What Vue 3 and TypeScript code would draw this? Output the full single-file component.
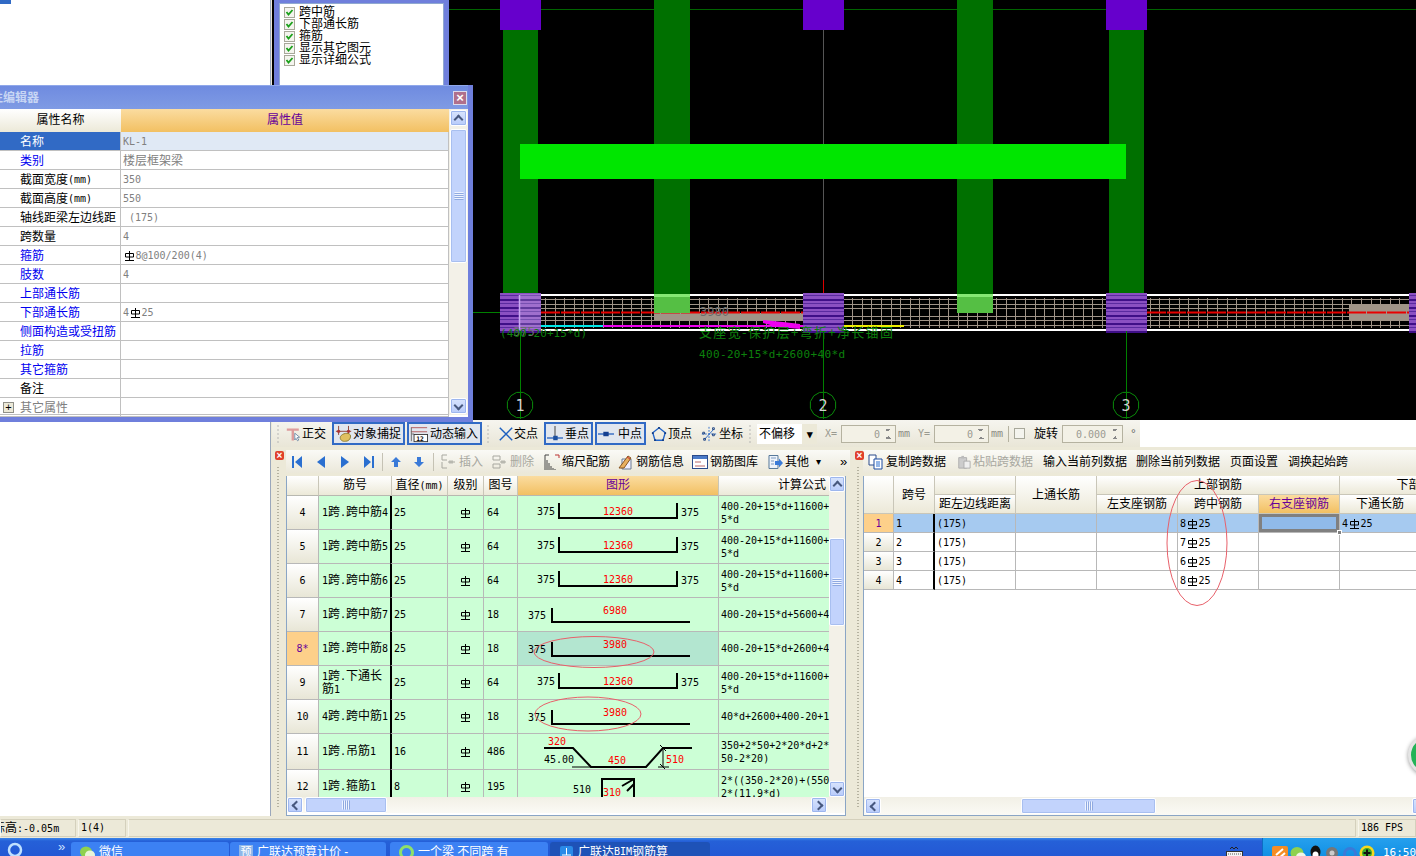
<script setup lang="ts">
import { h } from 'vue';

// Splits text into latin / CJK runs, the old bitmap font had 6px latin and 12px CJK.
// The rebar grade mark has no unicode glyph, so "⌀" becomes a small svg.
function Txt(props: { s: string }) {
  const runs = props.s.match(/⌀|[\x20-\x7e\n]+|[^\x20-\x7e⌀\n]+/g) ?? [];
  return runs.map((r) => {
    if (r === '⌀') {
      return h('svg', { class: 'bar', viewBox: '0 0 9 10', width: 9, height: 10 }, [
        h('path', { d: 'M.5 2.5h8v3.5h-8zM4.5 0v9.5M0 9.5h9', fill: 'none', stroke: '#000', 'stroke-width': 1 }),
      ]);
    }
    return h('span', { class: /^[\x20-\x7e\n]/.test(r) ? 'lat' : undefined }, r);
  });
}
Txt.props = ['s'];

const checks = ['跨中筋', '下部通长筋', '箍筋', '显示其它图元', '显示详细公式'];

const propRows = [
  { name: '名称', value: 'KL-1', kind: 'sel' },
  { name: '类别', value: '楼层框架梁', kind: 'blue' },
  { name: '截面宽度(mm)', value: '350', kind: '' },
  { name: '截面高度(mm)', value: '550', kind: '' },
  { name: '轴线距梁左边线距', value: ' (175)', kind: '' },
  { name: '跨数量', value: '4', kind: '' },
  { name: '箍筋', value: '⌀8@100/200(4)', kind: 'blue' },
  { name: '肢数', value: '4', kind: 'blue' },
  { name: '上部通长筋', value: '', kind: 'blue' },
  { name: '下部通长筋', value: '4⌀25', kind: 'blue' },
  { name: '侧面构造或受扭筋', value: '', kind: 'blue' },
  { name: '拉筋', value: '', kind: 'blue' },
  { name: '其它箍筋', value: '', kind: 'blue' },
  { name: '备注', value: '', kind: '' },
  { name: '其它属性', value: '', kind: 'group' },
];

const snapA = [
  { icon: 'ortho', label: '正交', w: 47, on: false },
  { icon: 'magnet', label: '对象捕捉', w: 73, on: true },
  { icon: 'dyn', label: '动态输入', w: 75, on: true },
];
const snapB = [
  { icon: 'cross', label: '交点', w: 47, on: false },
  { icon: 'perp', label: '垂点', w: 49, on: true },
  { icon: 'mid', label: '中点', w: 51, on: true },
  { icon: 'vertex', label: '顶点', w: 48, on: false },
  { icon: 'coord', label: '坐标', w: 49, on: false },
];

const leftTools = [
  { icon: 'insert', label: '插入', w: 44, off: true },
  { icon: 'remove', label: '删除', w: 45, off: true },
  { icon: 'scale', label: '缩尺配筋', w: 67, off: false },
  { icon: 'info', label: '钢筋信息', w: 67, off: false },
  { icon: 'lib', label: '钢筋图库', w: 68, off: false },
  { icon: 'other', label: '其他', w: 42, off: false },
];

const rightTools = [
  { icon: 'copy', label: '复制跨数据', off: false, w: 79 },
  { icon: 'paste', label: '粘贴跨数据', off: true, w: 76 },
  { icon: '', label: '输入当前列数据', off: false, w: 83 },
  { icon: '', label: '删除当前列数据', off: false, w: 84 },
  { icon: '', label: '页面设置', off: false, w: 48 },
  { icon: '', label: '调换起始跨', off: false, w: 60 },
];

const barRows = [
  { no: '4', name: '1跨.跨中筋4', dia: '25', pic: '64', fig: 'u', len: '12360', formula: '400-20+15*d+11600+\n5*d' },
  { no: '5', name: '1跨.跨中筋5', dia: '25', pic: '64', fig: 'u', len: '12360', formula: '400-20+15*d+11600+\n5*d' },
  { no: '6', name: '1跨.跨中筋6', dia: '25', pic: '64', fig: 'u', len: '12360', formula: '400-20+15*d+11600+\n5*d' },
  { no: '7', name: '1跨.跨中筋7', dia: '25', pic: '18', fig: 'l', len: '6980', formula: '400-20+15*d+5600+40*d' },
  { no: '8*', name: '1跨.跨中筋8', dia: '25', pic: '18', fig: 'l', len: '3980', formula: '400-20+15*d+2600+40*d', cur: true },
  { no: '9', name: '1跨.下通长筋1', dia: '25', pic: '64', fig: 'u', len: '12360', formula: '400-20+15*d+11600+\n5*d' },
  { no: '10', name: '4跨.跨中筋1', dia: '25', pic: '18', fig: 'l', len: '3980', formula: '40*d+2600+400-20+15*d' },
  { no: '11', name: '1跨.吊筋1', dia: '16', pic: '486', fig: 'hanger', len: '', formula: '350+2*50+2*20*d+2*\n50-2*20)', tall: true },
  { no: '12', name: '1跨.箍筋1', dia: '8', pic: '195', fig: 'hoop', len: '', formula: '2*((350-2*20)+(550-\n2*(11.9*d)' },
];

const spanRows = [
  { no: '1', mid: '8⌀25', low: '4⌀25', cur: true },
  { no: '2', mid: '7⌀25', low: '', cur: false },
  { no: '3', mid: '6⌀25', low: '', cur: false },
  { no: '4', mid: '8⌀25', low: '', cur: false },
];

const axes = [
  { x: 520, n: '1' },
  { x: 823, n: '2' },
  { x: 1126, n: '3' },
];

// Axis bubbles are 12 sided on the CAD canvas
const ring = Array.from({ length: 12 }, (_, i) => {
  const a = (i * Math.PI) / 6 + Math.PI / 12;
  return `${(13 * Math.cos(a)).toFixed(1)},${(13 * Math.sin(a)).toFixed(1)}`;
}).join(' ');

const columnsAt = [500, 803, 1106, 1409];
const hatchY = [299, 304, 308, 316, 320, 325];
const stirrups: number[] = [];
for (let x = 545; x < 1409; x += 9.6) {
  if (x > 800 && x < 846) continue;
  if (x > 1103 && x < 1149) continue;
  stirrups.push(Math.round(x) + 0.5);
}
</script>

<template>
  <div class="app">
    <svg class="defs" width="0" height="0">
      <symbol id="i-ortho" viewBox="0 0 20 18">
        <path d="M1 2h15v3h-6v12H7V5H1z" fill="#dd9c9c" />
        <path d="M11 8l6 5-3 .5 2 3-1.500 1-2-3-1.500 2z" fill="#fff" stroke="#5a7a9a" />
      </symbol>
      <symbol id="i-magnet" viewBox="0 0 20 18">
        <path d="M4 0v10M15 0v10M1 6h17" stroke="#8a3a2a" fill="none" />
        <circle cx="4" cy="6" r="1.800" fill="#a33" />
        <circle cx="15" cy="6" r="1.800" fill="#a33" />
        <path d="M6 12c2-4 9-5 11-2 1 3-1 7-5 7-4 1-7-2-6-5z" fill="#e0c060" stroke="#8a7a30" />
      </symbol>
      <symbol id="i-dyn" viewBox="0 0 20 18">
        <path d="M1 2h18M1 6.500h18" stroke="#b05050" fill="none" />
        <path d="M1.500 2v15M1.500 9h3" stroke="#666" fill="none" />
        <rect x="4.500" y="9.500" width="15" height="8" fill="#fff" stroke="#333" />
        <text x="7" y="16.500" font-size="7" font-family="DejaVu Sans Mono" font-weight="700">12</text>
      </symbol>
      <symbol id="i-cross" viewBox="0 0 18 18">
        <path d="M2 2l14 14M16 2L2 16" stroke="#1c5fc0" stroke-width="1.600" />
      </symbol>
      <symbol id="i-perp" viewBox="0 0 18 18">
        <path d="M9 0v13" stroke="#333" />
        <path d="M0 13.500h18" stroke="#2a63c0" stroke-width="1.500" />
        <rect x="7" y="11" width="5" height="5" fill="#1c4fa0" />
      </symbol>
      <symbol id="i-mid" viewBox="0 0 18 18">
        <path d="M0 9h18" stroke="#2a63c0" stroke-width="1.500" />
        <rect x="6" y="6.500" width="6" height="5" fill="#153f90" />
      </symbol>
      <symbol id="i-vertex" viewBox="0 0 18 18">
        <path d="M9 2l7 5.500L13.500 16h-9L2 7.500z" fill="none" stroke="#2263c8" stroke-width="1.500" />
        <path d="M8 1h2v2H8zM1 7h2v2H1zM15 7h2v2h-2zM3.500 15h2v2h-2zM12.500 15h2v2h-2z" fill="#143c80" />
      </symbol>
      <symbol id="i-coord" viewBox="0 0 18 18">
        <path d="M9 1v16M1 9h16" stroke="#2263c8" stroke-dasharray="2 1.500" />
        <path d="M4 15L14 4" stroke="#2263c8" />
        <path d="M2 7h2v2H2zM13 2h2v2h-2zM3 14h2v2H3zM13 9h2v2h-2z" fill="none" stroke="#143c80" />
      </symbol>
      <symbol id="i-first" viewBox="0 0 12 14">
        <path d="M1 1h2v12H1zM11 1v12L4 7z" fill="#2a6fd0" />
      </symbol>
      <symbol id="i-prev" viewBox="0 0 12 14"><path d="M10 1v12L2 7z" fill="#2a6fd0" /></symbol>
      <symbol id="i-next" viewBox="0 0 12 14"><path d="M2 1v12l8-6z" fill="#2a6fd0" /></symbol>
      <symbol id="i-last" viewBox="0 0 12 14">
        <path d="M9 1h2v12H9zM1 1v12l7-6z" fill="#2a6fd0" />
      </symbol>
      <symbol id="i-up" viewBox="0 0 12 12"><path d="M6 1l5 5H8v5H4V6H1z" fill="#3a7ad8" /></symbol>
      <symbol id="i-down" viewBox="0 0 12 12"><path d="M6 11L1 6h3V1h4v5h3z" fill="#3a7ad8" /></symbol>
      <symbol id="i-insert" viewBox="0 0 16 16">
        <path d="M1 1h5M1 1v5h5M1 8v6h5M7 8h7" stroke="#a8a8a0" fill="none" />
        <rect x="8" y="6.500" width="4" height="3" fill="#b8b8b0" />
      </symbol>
      <symbol id="i-remove" viewBox="0 0 16 16">
        <path d="M1 2h7v4H1zM1 10h7v4H1zM8 8h6" stroke="#a8a8a0" fill="none" />
        <rect x="9" y="6.500" width="4" height="3" fill="#b8b8b0" />
      </symbol>
      <symbol id="i-scale" viewBox="0 0 16 16">
        <path d="M1 16V1h4M3 16V6M5 16V9M7 16v-4M9 16v-2M11 16v-1" stroke="#444" fill="none" />
        <path d="M11 1h4v3" stroke="#b33" fill="none" />
      </symbol>
      <symbol id="i-info" viewBox="0 0 16 16">
        <path d="M4 5h9v10H4z" fill="#eef" stroke="#6a7a90" />
        <path d="M1 14l9-12 3 2L6 14z" fill="#e8b060" stroke="#885522" />
        <path d="M9 3l3 2" stroke="#c33" />
      </symbol>
      <symbol id="i-lib" viewBox="0 0 16 16">
        <rect x=".5" y="1.500" width="15" height="13" fill="#fff" stroke="#2a4a8a" />
        <path d="M1 2h14v3H1z" fill="#4a7ac8" />
        <path d="M3 8h6M3 12h10" stroke="#b66" />
      </symbol>
      <symbol id="i-other" viewBox="0 0 16 16">
        <path d="M2 1.500h9v13H2z" fill="#eef3fb" stroke="#56789a" />
        <path d="M4 4h5M4 7h3M4 10h3" stroke="#7a9ac0" />
        <path d="M8 7h4V4.500L16 9l-4 4.500V11H8z" fill="#3a7ad8" />
      </symbol>
      <symbol id="i-copy" viewBox="0 0 16 16">
        <path d="M1 1h7v10H1z" fill="#fff" stroke="#2a4a8a" />
        <path d="M6 5h8v10H6z" fill="#fff" stroke="#1a4aa0" />
        <path d="M8 8h4M8 10h4M8 12h4" stroke="#2a6fd0" />
      </symbol>
      <symbol id="i-paste" viewBox="0 0 16 16">
        <path d="M2 3h9v12H2z" fill="#ccc" stroke="#aaa" />
        <path d="M5 1h3v3H5z" fill="#bbb" />
        <path d="M8 7h7v8H8z" fill="#eee" stroke="#aaa" />
      </symbol>
    </svg>

    <!-- left tree pane, covered for most part by the property window -->
    <aside class="tree-pane"><div class="tree-sel"></div></aside>

    <main class="workspace">
      <section class="canvas-area">
        <svg class="cad" viewBox="272 0 1144 420" width="1144" height="420">
          <defs>
            <pattern id="hatch" width="41" height="8" patternUnits="userSpaceOnUse">
              <rect width="41" height="8" fill="#8a50c2" />
              <rect y="3" width="41" height="2" fill="#3f0f88" />
              <rect y="7" width="41" height="1" fill="#5a2aa0" />
            </pattern>
          </defs>
          <path d="M449 9.500H1416" stroke="#006400" />
          <path d="M472 312.500H500" stroke="#008000" />
          <g fill="#007000">
            <rect x="503" y="30" width="35" height="264" />
            <rect x="654" y="0" width="36" height="294" />
            <rect x="957" y="0" width="36" height="294" />
            <rect x="1109" y="30" width="35" height="264" />
          </g>
          <path d="M823.500 30V280" stroke="#555" />
          <path d="M823.500 280V294" stroke="#d00" />
          <g fill="#6600cc">
            <rect x="500" y="0" width="41" height="30" />
            <rect x="803" y="0" width="41" height="30" />
            <rect x="1106" y="0" width="41" height="30" />
          </g>
          <rect x="520" y="144" width="606" height="35" fill="#00e600" />

          <!-- beam elevation -->
          <rect x="500" y="294" width="916" height="2" fill="#fff" />
          <rect x="500" y="329" width="916" height="2" fill="#fff" />
          <path v-for="y in hatchY" :key="y" :d="`M500 ${y + 0.5}H1416`" stroke="#a09488" />
          <path v-for="x in stirrups" :key="x" :d="`M${x} 298V328`" stroke="#a09488" />
          <rect x="654" y="313" width="149" height="7" fill="#a09488" />
          <rect x="1349" y="304" width="60" height="17" fill="#a09488" />
          <path d="M541 312.500H803M1147 312.500H1409" stroke="#e80000" stroke-width="2" stroke-dasharray="19 1" />
          <rect x="541" y="325" width="62" height="2" fill="#00e8e8" />
          <rect x="603" y="325" width="200" height="2" fill="#f000f0" />
          <path d="M763 320l20 2 17 2v5l-22-2-15-4z" fill="#f000f0" />
          <rect x="844" y="325" width="60" height="2" fill="#f0f000" />
          <g fill="#55bf44">
            <rect x="654" y="294" width="36" height="19" />
            <rect x="957" y="294" width="36" height="19" />
          </g>
          <g fill="#86e874">
            <rect x="654" y="294" width="36" height="3" />
            <rect x="957" y="294" width="36" height="3" />
          </g>
          <rect v-for="x in columnsAt" :key="x" :x="x" y="293" width="41" height="40" fill="url(#hatch)" />
          <rect x="520" y="294" width="21" height="35" fill="#fff" opacity=".18" />
          <path d="M519.500 295V330" stroke="#c8a8f0" stroke-width="1.500" />
          <text class="cad-dim" x="700" y="316">3980</text>
          <text class="cad-dim" x="513" y="336">375</text>
          <text class="cad-note" x="500" y="337" textLength="87">(400-20+15*d)</text>
          <text class="cad-note cjk" x="699" y="337" textLength="194">支座宽-保护层+弯折+净长锚固</text>
          <text class="cad-note" x="699" y="358" textLength="146">400-20+15*d+2600+40*d</text>

          <!-- axis bubbles -->
          <g v-for="a in axes" :key="a.n" :transform="`translate(${a.x} 405)`">
            <path d="M.5 -74V14" stroke="#008000" />
            <polygon :points="ring" fill="#000" stroke="#0a8a0a" />
            <path d="M.5 -13V14" stroke="#008000" />
            <text class="axis-no" x="0" y="6">{{ a.n }}</text>
          </g>
        </svg>

        <div class="check-panel">
          <ul class="check-list">
            <li v-for="c in checks" :key="c">
              <svg class="check" viewBox="0 0 11 11" width="11" height="11">
                <rect x=".5" y=".5" width="10" height="10" fill="#f4f4ee" stroke="#a8a89a" />
                <path d="M2.500 5l2 2.500L8.500 3" fill="none" stroke="#1aa01a" stroke-width="1.800" />
              </svg>
              {{ c }}
            </li>
          </ul>
        </div>
      </section>

      <section class="snap-bar">
        <div class="snap-inner">
          <i class="grip"></i>
          <div class="snap-group">
            <div v-for="t in snapA" :key="t.label" class="snap-tool" :class="{ on: t.on }" :style="{ width: t.w + 'px' }">
              <svg width="18" height="18"><use :href="'#i-' + t.icon" /></svg>{{ t.label }}
            </div>
          </div>
          <i class="grip g2"></i>
          <div class="snap-group">
            <div v-for="t in snapB" :key="t.label" class="snap-tool" :class="{ on: t.on }" :style="{ width: t.w + 'px' }">
              <svg width="16" height="16"><use :href="'#i-' + t.icon" /></svg>{{ t.label }}
            </div>
          </div>
          <i class="grip g3"></i>
          <div class="offset-select"><span>不偏移</span><b>▾</b></div>
          <span class="dim-label lx"><Txt s="X=" /></span>
          <div class="spin"><Txt s="0" /><i></i></div>
          <span class="dim-unit"><Txt s="mm" /></span>
          <span class="dim-label ly"><Txt s="Y=" /></span>
          <div class="spin"><Txt s="0" /><i></i></div>
          <span class="dim-unit"><Txt s="mm" /></span>
          <span class="v-sep"></span>
          <span class="box-check"></span>
          <span class="rotate">旋转</span>
          <div class="spin rot"><Txt s="0.000" /><i></i></div>
          <span class="deg"><Txt s="°" /></span>
        </div>
      </section>

      <section class="panes">
        <div class="pane pane-left">
          <div class="pane-grip"><span class="pane-close">×</span></div>
          <div class="pane-body">
            <div class="tbar tbar-left">
              <svg class="nav n1" width="12" height="14"><use href="#i-first" /></svg>
              <svg class="nav" width="12" height="14"><use href="#i-prev" /></svg>
              <svg class="nav" width="12" height="14"><use href="#i-next" /></svg>
              <svg class="nav" width="12" height="14"><use href="#i-last" /></svg>
              <span class="t-sep"></span>
              <svg class="arrow" width="12" height="12"><use href="#i-up" /></svg>
              <svg class="arrow" width="12" height="12"><use href="#i-down" /></svg>
              <span class="t-sep s2"></span>
              <div v-for="t in leftTools" :key="t.label" class="t-btn" :class="{ off: t.off }" :style="{ width: t.w + 'px' }">
                <svg width="16" height="16"><use :href="'#i-' + t.icon" /></svg>{{ t.label }}
              </div>
              <span class="drop">▾</span>
              <span class="more">»</span>
            </div>
            <div class="bar-frame">
              <div class="bar-table">
                <div class="bar-head">
                  <div></div>
                  <div>筋号</div>
                  <div><Txt s="直径(mm)" /></div>
                  <div>级别</div>
                  <div>图号</div>
                  <div class="hot">图形</div>
                  <div class="end">计算公式</div>
                </div>
                <div class="bar-rows">
                  <div v-for="r in barRows" :key="r.no" class="bar-row" :class="{ tall: r.tall, cur: r.cur }">
                    <div class="no"><Txt :s="r.no" /></div>
                    <div class="name"><span><Txt :s="r.name" /></span></div>
                    <div class="dia"><Txt :s="r.dia" /></div>
                    <div class="grade"><Txt s="⌀" /></div>
                    <div class="pic"><Txt :s="r.pic" /></div>
                    <div class="fig">
                      <svg width="201" height="36" viewBox="0 0 201 36">
                        <template v-if="r.fig === 'u'">
                          <path d="M41 7v15h118V7" fill="none" stroke="#000" stroke-width="2" />
                          <text x="19" y="19">375</text>
                          <text x="163" y="20">375</text>
                          <text class="red" x="85" y="19">{{ r.len }}</text>
                        </template>
                        <template v-else-if="r.fig === 'l'">
                          <path d="M34 10v14h138" fill="none" stroke="#000" stroke-width="2" />
                          <text x="10" y="21">375</text>
                          <text class="red" x="85" y="16">{{ r.len }}</text>
                        </template>
                        <template v-else-if="r.fig === 'hanger'">
                          <path d="M26 14h29l18 19h55l17-19h29" fill="none" stroke="#000" stroke-width="2" />
                          <path d="M54 33h20M145 14v19M140 33h11M142 11l6 6M142 30l6 6" fill="none" stroke="#000" />
                          <text x="26" y="29">45.00</text>
                          <text class="red" x="30" y="11">320</text>
                          <text class="red" x="90" y="30">450</text>
                          <text class="red" x="148" y="29">510</text>
                        </template>
                        <template v-else>
                          <path d="M84 28V9h32v19M116 9l-12 7M116 14l-7 7" fill="none" stroke="#000" stroke-width="2" />
                          <text x="55" y="23">510</text>
                          <text class="red" x="85" y="26">310</text>
                        </template>
                      </svg>
                    </div>
                    <div class="formula"><span><Txt :s="r.formula" /></span></div>
                  </div>
                </div>
              </div>
              <div class="sb-v">
                <span class="sb-btn"><i class="chev up"></i></span>
                <span class="sb-track"><span class="sb-thumb v"></span></span>
                <span class="sb-btn"><i class="chev down"></i></span>
              </div>
              <div class="sb-h">
                <span class="sb-btn"><i class="chev left"></i></span>
                <span class="sb-track"><span class="sb-thumb h"></span></span>
                <span class="sb-btn"><i class="chev right"></i></span>
              </div>
            </div>
          </div>
          <svg class="marks" width="580" height="369">
            <ellipse cx="322" cy="205" rx="60" ry="15.500" />
            <ellipse cx="316" cy="267" rx="53" ry="17" />
          </svg>
        </div>

        <div class="pane pane-right">
          <div class="pane-grip thin"><span class="pane-close">×</span></div>
          <div class="pane-body">
            <div class="tbar tbar-right">
              <div v-for="t in rightTools" :key="t.label" class="t-btn" :class="{ off: t.off }" :style="{ width: t.w + 'px' }">
                <svg v-if="t.icon" width="16" height="16"><use :href="'#i-' + t.icon" /></svg>{{ t.label }}
              </div>
            </div>
            <div class="span-frame">
              <div class="span-table">
                <div class="sh r2"></div>
                <div class="sh r2">跨号</div>
                <div class="sh"></div>
                <div class="sh r2">上通长筋</div>
                <div class="sh c3">上部钢筋</div>
                <div class="sh c2">下部钢筋</div>
                <div class="sh">距左边线距离</div>
                <div class="sh">左支座钢筋</div>
                <div class="sh">跨中钢筋</div>
                <div class="sh hot">右支座钢筋</div>
                <div class="sh">下通长筋</div>
                <div class="sh"></div>
                <template v-for="r in spanRows" :key="r.no">
                  <div class="sc head" :class="{ cur: r.cur }"><Txt :s="r.no" /></div>
                  <div class="sc line" :class="{ cur: r.cur }"><Txt :s="r.no" /></div>
                  <div class="sc" :class="{ cur: r.cur }"><Txt s="(175)" /></div>
                  <div class="sc" :class="{ cur: r.cur }"></div>
                  <div class="sc" :class="{ cur: r.cur }"></div>
                  <div class="sc" :class="{ cur: r.cur }"><Txt :s="r.mid" /></div>
                  <div class="sc" :class="{ cur: r.cur, picked: r.cur }"></div>
                  <div class="sc" :class="{ cur: r.cur }"><Txt :s="r.low" /></div>
                  <div class="sc" :class="{ cur: r.cur }"></div>
                </template>
              </div>
              <div class="sb-h right">
                <span class="sb-btn"><i class="chev left"></i></span>
                <span class="sb-track"><span class="sb-thumb h2"></span></span>
                <span class="sb-btn"><i class="chev right"></i></span>
              </div>
            </div>
          </div>
          <svg class="marks" width="564" height="369">
            <ellipse cx="345" cy="96" rx="30" ry="62.500" />
          </svg>
        </div>
      </section>
    </main>

    <footer class="statusbar">
      <div class="st st-elev"><span><Txt s="标高:-0.05m" /></span></div>
      <div class="st st-span"><Txt s="1(4)" /></div>
      <div class="st st-fill"></div>
      <div class="st st-fps"><Txt s="186 FPS" /></div>
    </footer>

    <nav class="taskbar">
      <div class="quick">
        <svg width="16" height="16" viewBox="0 0 16 16"><circle cx="8" cy="9" r="6" fill="none" stroke="#bfe0ff" stroke-width="2.500" /></svg>
        <span class="quick-more">»</span>
      </div>
      <div class="task t1">
        <svg width="15" height="15" viewBox="0 0 15 15"><ellipse cx="6" cy="7" rx="6" ry="5.500" fill="#8fd14f" /><ellipse cx="10" cy="10" rx="5" ry="4.500" fill="#e8f5d8" /></svg>
        微信
      </div>
      <div class="task t2">
        <span class="t-ico">预</span>
        广联达预算计价 -
      </div>
      <div class="task t3">
        <svg width="15" height="15" viewBox="0 0 15 15"><circle cx="7.500" cy="7.500" r="6" fill="none" stroke="#8fe06a" stroke-width="3" /></svg>
        一个梁 不同跨 有
      </div>
      <div class="task t4">
        <svg width="15" height="15" viewBox="0 0 15 15"><rect x="1" y="1" width="13" height="13" rx="2" fill="#2a8ae8" /><path d="M3 10h9M7.500 3v7" stroke="#fff" /></svg>
        广联达<span class="task-lat">BIM</span>钢筋算
      </div>
      <svg class="keyboard" width="17" height="18" viewBox="0 0 17 18">
        <path d="M4 3l2-2 2 2 2-2 2 2" fill="none" stroke="#222" />
        <rect x=".5" y="5.500" width="16" height="12" fill="#f4f4f4" stroke="#333" />
        <path d="M2 8h13M2 11h13" stroke="#555" stroke-dasharray="1 1" />
      </svg>
      <div class="tray">
        <svg width="16" height="18" viewBox="0 0 16 18"><rect y="2" width="16" height="16" rx="2" fill="#f58d24" /><path d="M4 11l7-6M6 15l7-6" stroke="#fff" stroke-width="2" /></svg>
        <svg width="16" height="18" viewBox="0 0 16 18"><ellipse cx="7" cy="9" rx="6.500" ry="6" fill="#8fd14f" /><ellipse cx="11" cy="13" rx="5" ry="4.500" fill="#f0f6e8" /></svg>
        <svg width="15" height="18" viewBox="0 0 15 18"><ellipse cx="7.500" cy="8" rx="5" ry="6.500" fill="#111" /><ellipse cx="7.500" cy="11" rx="3" ry="3.500" fill="#fff" /><path d="M2 13h11v4H2z" fill="#d22" /></svg>
        <svg width="15" height="18" viewBox="0 0 15 18"><circle cx="7" cy="9" r="6" fill="#777" /><circle cx="7" cy="9" r="2.500" fill="#ccc" /></svg>
        <svg width="15" height="18" viewBox="0 0 15 18"><circle cx="8" cy="10" r="5.500" fill="none" stroke="#3a7ad8" stroke-width="3" /></svg>
        <svg width="16" height="18" viewBox="0 0 16 18"><circle cx="8" cy="9" r="7.500" fill="#f5d820" /><circle cx="8" cy="9" r="5" fill="#3aa82a" /><path d="M8 5.500v7M4.500 9h7" stroke="#111" stroke-width="2" /></svg>
        <span class="clock">16:50</span>
      </div>
    </nav>

    <!-- floating windows -->
    <section class="prop-window">
      <header class="prop-title">
        <span>属性编辑器</span>
        <b class="prop-close">×</b>
      </header>
      <div class="prop-body">
        <div class="prop-grid">
          <div class="prop-head">属性名称</div>
          <div class="prop-head hot">属性值</div>
          <template v-for="p in propRows" :key="p.name">
            <div class="prop-name" :class="p.kind">
              <span v-if="p.kind === 'group'" class="plus">+</span>
              <Txt :s="p.name" />
            </div>
            <div class="prop-val" :class="{ sel: p.kind === 'sel' }"><Txt :s="p.value" /></div>
          </template>
        </div>
        <div class="prop-sb">
          <span class="sb-btn"><i class="chev up"></i></span>
          <span class="sb-track"><span class="sb-thumb pv"></span></span>
          <span class="sb-btn"><i class="chev down"></i></span>
        </div>
      </div>
    </section>

    <div class="float-badge"></div>
  </div>
</template>

<style scoped>
.app {
  position: relative;
  width: 1416px;
  height: 856px;
  overflow: hidden;
  display: grid;
  grid-template-columns: 272px 1144px;
  grid-template-rows: 816px 22px 18px;
  background: #ece9d8;
  font-family: "Liberation Sans", "Noto Sans CJK SC", sans-serif;
  font-size: 12px;
  color: #000;
  line-height: 14px;
}
.defs { position: absolute; }

/* ---- tree pane ---- */
.tree-pane {
  background: #fff;
  border-right: 1px solid #9aa7bb;
  width: 270px;
}
.tree-sel { width: 11px; height: 4px; background: #316ac5; }

/* ---- canvas ---- */
.workspace { display: flex; flex-direction: column; min-width: 0; }
.canvas-area { position: relative; height: 420px; background: #000; flex: none; }
.cad { display: block; }
.cad-dim { font: 12px "DejaVu Sans Mono", monospace; fill: #6c6c6c; }
.cad-note { font: 11px "DejaVu Sans Mono", monospace; fill: #0c800c; }
.cad-note.cjk { font: 13px "Noto Sans CJK SC", sans-serif; }
.axis-no { font: 15px "DejaVu Sans Mono", monospace; fill: #d0d0d0; text-anchor: middle; }

.check-panel {
  position: absolute;
  left: 2px;
  top: 0;
  width: 175px;
  height: 100px;
  background: #6f7fdc;
  padding: 3px 5px;
  box-sizing: border-box;
}
.check-list {
  list-style: none;
  margin: 0;
  padding: 2px 0 0 4px;
  height: 100%;
  background: #fff;
  border: 1px solid #8fa8d0;
  box-sizing: border-box;
}
.check-list li {
  display: flex;
  align-items: center;
  gap: 4px;
  height: 12px;
  font-size: 12px;
  white-space: nowrap;
}

/* ---- snap toolbar ---- */
.snap-bar { height: 27px; flex: none; background: #fff; }
.snap-inner {
  width: 868px;
  height: 27px;
  display: flex;
  align-items: center;
  background: linear-gradient(#f6f5ef, #e9e6d7);
  box-sizing: border-box;
}
.grip {
  width: 2px;
  height: 18px;
  margin: 0 4px 0 5px;
  background: repeating-linear-gradient(#aaa6 0 2px, transparent 2px 4px);
}
.g2 { margin: 0 6px 0 5px; }
.g3 { margin: 0 6px 0 2px; }
.snap-group { display: flex; gap: 2px; }
.snap-tool {
  display: flex;
  align-items: center;
  justify-content: space-between;
  height: 23px;
  padding: 0 3px 0 2px;
  box-sizing: border-box;
  white-space: nowrap;
  border: 1px solid transparent;
}
.snap-tool.on {
  border: 2px solid #316ac5;
  background: #e1e6ee;
  padding: 0 2px 0 1px;
}
.offset-select {
  width: 60px;
  height: 20px;
  display: flex;
  background: #fff;
  align-items: center;
  padding-left: 2px;
  box-sizing: border-box;
  margin-left: 0;
  font-size: 12px;
}
.offset-select span { flex: 1; white-space: nowrap; }
.offset-select b {
  width: 15px;
  height: 20px;
  background: #ece9d8;
  text-align: center;
  line-height: 20px;
  font-size: 11px;
}
.dim-label { color: #9a9a90; width: 16px; }
.lx { margin-left: 8px; }
.ly { margin-left: 8px; }
.spin {
  position: relative;
  width: 55px;
  height: 18px;
  border: 1px solid #b5b2a0;
  box-sizing: border-box;
  text-align: right;
  padding-right: 15px;
  line-height: 16px;
  color: #9a9a90;
  background: #f3f1e6;
}
.spin i {
  position: absolute;
  right: 4px;
  top: 3px;
  width: 6px;
  height: 10px;
  background:
    linear-gradient(45deg, transparent 50%, #888 50%) left top / 3px 3px no-repeat,
    linear-gradient(-45deg, transparent 50%, #888 50%) right top / 3px 3px no-repeat,
    linear-gradient(135deg, transparent 50%, #888 50%) left bottom / 3px 3px no-repeat,
    linear-gradient(-135deg, transparent 50%, #888 50%) right bottom / 3px 3px no-repeat;
}
.dim-unit { color: #8a8a80; margin-left: 2px; width: 12px; }
.v-sep { width: 1px; height: 16px; background: #b5b2a0; margin: 0 5px 0 5px; }
.box-check { width: 11px; height: 11px; border: 1px solid #a8a89a; box-sizing: border-box; background: #f4f4ee; flex: none; }
.rotate { margin: 0 4px 0 9px; white-space: nowrap; flex: none; }
.spin.rot { width: 61px; padding-right: 16px; flex: none; }
.deg { margin-left: 8px; color: #666; }

/* ---- lower panes ---- */
.panes { flex: 1; display: flex; min-height: 0; }
.pane { position: relative; display: flex; background: #ece9d8; min-width: 0; }
.pane-left { width: 580px; flex: none; }
.pane-right { width: 564px; flex: none; }
.pane-grip {
  width: 14px;
  flex: none;
  position: relative;
  background: repeating-linear-gradient(#b5b2a0 0 1px, transparent 1px 3px) 5px 20px / 2px 340px no-repeat;
}
.pane-grip.thin { width: 11px; }
.pane-close {
  position: absolute;
  left: 3px;
  top: 4px;
  width: 9px;
  height: 9px;
  background: #e0402a;
  color: #fff;
  font-size: 10px;
  line-height: 9px;
  text-align: center;
  border-radius: 2px;
  font-weight: 700;
}
.pane-body { flex: 1; display: flex; flex-direction: column; min-width: 0; padding-top: 3px; }
.tbar {
  height: 23px;
  display: flex;
  align-items: center;
  background: linear-gradient(#fafaf6, #ebe8da);
  flex: none;
  white-space: nowrap;
  margin-bottom: 3px;
}
.tbar-left { gap: 7px; width: 564px; }
.n1 { margin-left: 5px; }
.nav { margin-right: 5px; flex: none; }
.arrow { margin: 0 4px 0 0; flex: none; }
.t-sep { width: 1px; height: 18px; background: #c5c2b4; margin-left: -5px; flex: none; }
.t-sep.s2 { margin-left: -3px; }
.t-btn { display: flex; align-items: center; gap: 2px; flex: none; }
.t-btn.off { color: #a8a8a0; }
.drop { font-size: 10px; }
.more { margin-left: 12px; font-size: 13px; }
.tbar-right { gap: 10px; padding-left: 5px; }

.bar-frame {
  width: 560px;
  height: 340px;
  display: grid;
  grid-template-columns: 542px 16px;
  grid-template-rows: 321px 16px;
  border: 1px solid #8aa5c5;
  border-top: 0;
  box-sizing: border-box;
  background: #fff;
}
.bar-table { overflow: hidden; min-width: 0; }
.bar-head, .bar-row {
  display: grid;
  grid-template-columns: 32px 73px 56px 36px 34px 201px 110px;
}
.bar-head { height: 20px; }
.bar-head > div {
  background: linear-gradient(#fff, #ece9d8);
  border-right: 1px solid #c9c6b8;
  border-bottom: 1px solid #b8b8b0;
  box-sizing: border-box;
  text-align: center;
  line-height: 19px;
  white-space: nowrap;
  overflow: hidden;
}
.bar-head > .hot { background: linear-gradient(#fbdca0, #f2c062); color: #660099; }
.bar-head > .end { text-align: right; padding-right: 3px; border-right: 0; }
.bar-row { height: 34px; background: #ccffd6; }
.bar-row.tall { height: 36px; }
.bar-row > div {
  border-right: 1px solid #b8b8b8;
  border-bottom: 1px solid #b8b8b8;
  box-sizing: border-box;
  display: flex;
  align-items: center;
  overflow: hidden;
}
.bar-row > .no {
  justify-content: center;
  background: linear-gradient(#fff, #e8e6d6);
}
.bar-row.cur > .no { background: #fdd08a; color: #660099; }
.bar-row.cur > .fig { background: #b3e6d0; }
.bar-row > .name { padding-left: 3px; line-height: 13px; }
.bar-row > .dia { padding-left: 2px; border-left: 2px solid #000; margin-left: -2px; }
.bar-row > .grade { justify-content: center; }
.bar-row > .pic { padding-left: 3px; }
.bar-row > .fig { align-items: flex-start; }
.bar-row > .formula {
  white-space: pre;
  padding-left: 2px;
  line-height: 12px;
  border-right: 0;
}
.fig svg { display: block; flex: none; }
.fig text { font: 10px "DejaVu Sans Mono", monospace; fill: #000; }
.fig text.red { fill: #f00; }

.sb-v, .prop-sb { display: flex; flex-direction: column; background: #f3f1e8; }
.sb-h {
  grid-column: 1 / 3;
  display: flex;
  background: linear-gradient(#f2f0e6, #fbfaf5);
  padding-right: 18px;
}
.sb-btn {
  flex: none;
  width: 16px;
  height: 16px;
  box-sizing: border-box;
  border: 1px solid #fff;
  border-radius: 2px;
  background: linear-gradient(#d8e4fd, #b8cbfa);
  box-shadow: 0 0 0 1px #9db6ee inset;
  display: flex;
  align-items: center;
  justify-content: center;
}
.sb-track { flex: 1; position: relative; display: block; min-width: 0; }
.sb-thumb {
  position: absolute;
  box-sizing: border-box;
  border: 1px solid #fff;
  border-radius: 2px;
  background: #c2d3fc;
  box-shadow: 0 0 0 1px #a8bff0 inset;
}
.sb-thumb::after {
  content: '';
  position: absolute;
  left: 50%;
  top: 50%;
  width: 9px;
  height: 8px;
  transform: translate(-50%, -50%);
  background: repeating-linear-gradient(#eef3ff 0 1px, #8fa9e0 1px 2px);
}
.sb-thumb.h::after, .sb-thumb.h2::after {
  width: 8px;
  height: 9px;
  background: repeating-linear-gradient(90deg, #eef3ff 0 1px, #8fa9e0 1px 2px);
}
.sb-thumb.v { left: 0; right: 0; top: 46px; height: 88px; }
.sb-thumb.h { left: 2px; width: 82px; top: 0; height: 16px; }
.sb-thumb.h2 { left: 140px; width: 135px; top: 0; height: 16px; }
.sb-thumb.pv { left: 0; right: 0; top: 3px; height: 134px; }
.chev {
  display: block;
  width: 5px;
  height: 5px;
  border: solid #47587e;
  border-width: 2px 0 0 2px;
}
.chev.up { transform: translateY(1px) rotate(45deg); }
.chev.down { transform: translateY(-1px) rotate(225deg); }
.chev.left { transform: translateX(1px) rotate(-45deg); }
.chev.right { transform: translateX(-1px) rotate(135deg); }

.marks { position: absolute; left: 0; top: 0; pointer-events: none; }
.marks ellipse { fill: none; stroke: #e8606a; stroke-width: 1; }

.span-frame {
  height: 340px;
  border-left: 1px solid #8aa5c5;
  border-bottom: 1px solid #8aa5c5;
  box-sizing: border-box;
  background: #fff;
  display: flex;
  flex-direction: column;
  overflow: hidden;
}
.span-table {
  flex: 1;
  display: grid;
  grid-template-columns: 30px 41px 81px 81px 81px 81px 81px 81px 81px;
  grid-auto-rows: 19px;
  align-content: start;
  width: 640px;
}
.sh {
  background: linear-gradient(#fff, #ece9d8);
  border-right: 1px solid #c9c6b8;
  border-bottom: 1px solid #c9c6b8;
  box-sizing: border-box;
  text-align: center;
  line-height: 19px;
  white-space: nowrap;
  overflow: hidden;
}
.sh.r2 { grid-row: span 2; line-height: 38px; }
.sh.c3 { grid-column: span 3; }
.sh.c2 { grid-column: span 2; }
.sh.hot { background: linear-gradient(#fbdca0, #f2c062); color: #660099; }
.sc {
  position: relative;
  border-right: 1px solid #b8b8b8;
  border-bottom: 1px solid #b8b8b8;
  box-sizing: border-box;
  padding: 1px 0 0 2px;
  display: flex;
  align-items: center;
  white-space: nowrap;
  background: #fff;
}
.sc.cur { background: #a6caf0; }
.sc.head {
  justify-content: center;
  padding: 1px 0 0;
  background: linear-gradient(#fff, #e8e6d6);
}
.sc.head.cur { background: #fdd08a; color: #660099; }
.sc.line { border-right: 2px solid #000; }
.sc.picked {
  background: #90bae9;
  box-shadow: inset 0 0 0 3px #808080;
}
.sc.picked::after {
  content: '';
  position: absolute;
  right: -3px;
  bottom: -3px;
  width: 5px;
  height: 5px;
  background: #808080;
  border: 1px solid #fff;
  box-sizing: border-box;
  z-index: 1;
}
.sb-h.right { height: 18px; flex: none; padding: 1px 0 1px 1px; box-sizing: border-box; width: 555px; }
.sb-h.right .sb-btn:last-child { margin-right: -9px; }

/* ---- status + task bars ---- */
.statusbar {
  grid-column: 1 / 3;
  display: flex;
  gap: 2px;
  padding: 3px 0 0;
  box-sizing: border-box;
}
.st {
  height: 18px;
  border: 1px solid #d4d0bc;
  border-left-color: #f8f6ec;
  box-sizing: border-box;
  display: flex;
  align-items: center;
  padding-left: 2px;
  overflow: hidden;
  white-space: nowrap;
}
.st-elev { width: 76px; }
.st-elev span { margin-left: -10px; }
.st-span { width: 48px; }
.st-fill { width: 1228px; }
.st-fps { flex: 1; }

.taskbar {
  grid-column: 1 / 3;
  display: flex;
  background: linear-gradient(#3a86ea 0, #2560d8 3px, #2358d4);
  color: #fff;
  overflow: hidden;
  position: relative;
}
.quick { width: 71px; flex: none; display: flex; padding: 3px 0 0 7px; box-sizing: border-box; }
.quick-more { margin-left: 35px; line-height: 12px; font-size: 13px; color: #cfe0ff; }
.task {
  display: flex;
  gap: 4px;
  margin-top: 4px;
  padding: 3px 0 0 9px;
  border-radius: 3px 3px 0 0;
  box-sizing: border-box;
  background: #3c81f3;
  white-space: nowrap;
  flex: none;
  font-size: 12px;
}
.t1 { width: 158px; }
.t2 { width: 156px; margin-left: 1px; }
.t3 { width: 158px; margin-left: 4px; }
.t4 { width: 160px; margin-left: 2px; background: #1e52b7; }
.t-ico { width: 14px; height: 15px; background: #8fb6e8; text-align: center; font-size: 11px; }
.task-lat { font: 10px "DejaVu Sans Mono", monospace; line-height: 14px; margin: 0 -4px; }
.keyboard { position: absolute; left: 1226px; top: 8px; }
.tray {
  position: absolute;
  left: 1262px;
  right: 0;
  top: 0;
  height: 18px;
  background: linear-gradient(#26a0ee, #1190e4);
  display: flex;
  align-items: flex-start;
  gap: 2px;
  padding: 6px 0 0 10px;
  box-shadow: inset 1px 0 0 #0d6cc4;
  box-sizing: border-box;
}
.tray svg { flex: none; }
.clock { margin-left: 6px; font: 11px "DejaVu Sans Mono", monospace; line-height: 18px; white-space: nowrap; }

/* ---- property window ---- */
.prop-window {
  position: absolute;
  left: 0;
  top: 85px;
  width: 473px;
  height: 337px;
  background: #6f7fdc;
  padding: 0 5px 5px 0;
  box-sizing: border-box;
  display: flex;
  flex-direction: column;
}
.prop-title {
  height: 23px;
  flex: none;
  display: flex;
  align-items: center;
  justify-content: space-between;
  background: linear-gradient(#6f8be0, #7f9be4);
  overflow: hidden;
  color: #c8d6f4;
  font-weight: 700;
  white-space: nowrap;
  border-top: 1px solid #90a8ea;
}
.prop-title span { margin-left: -21px; }
.prop-close {
  width: 12px;
  height: 12px;
  margin-right: 1px;
  background: #b0708c;
  border: 1px solid #dcdcec;
  color: #fff;
  font-size: 13px;
  line-height: 11px;
  text-align: center;
}
.prop-body {
  flex: 1;
  display: flex;
  background: #fff;
  min-height: 0;
  padding-bottom: 2px;
}
.prop-grid {
  display: grid;
  grid-template-columns: 121px 328px;
  grid-template-rows: 23px repeat(15, 19px);
  width: 449px;
  flex: none;
  border-bottom: 1px solid #c0c0c0;
  box-sizing: border-box;
  border-right: 1px solid #c0c0c0;
}
.prop-head {
  text-align: center;
  background: linear-gradient(#fff, #ece9d8);
  line-height: 23px;
  font-size: 12px;
}
.prop-head.hot { background: linear-gradient(#fbdca0, #f2c062); color: #660099; }
.prop-name, .prop-val {
  border-bottom: 1px solid #c0c0c0;
  border-right: 1px solid #c0c0c0;
  box-sizing: border-box;
  display: flex;
  align-items: center;
  white-space: nowrap;
  overflow: hidden;
  padding-top: 1px;
}
.prop-name { padding-left: 20px; position: relative; }
.prop-name.blue { color: #0000f0; }
.prop-name.sel { background: #316ac5; color: #fff; }
.prop-name.group { color: #808080; }
.prop-val { padding-left: 2px; color: #808080; }
.prop-val.sel { background: #e0e9f5; }
.plus {
  position: absolute;
  left: 3px;
  top: 4px;
  width: 11px;
  height: 11px;
  border: 1px solid #909088;
  box-sizing: border-box;
  background: #ece9d8;
  color: #000;
  font-size: 11px;
  line-height: 8px;
  text-align: center;
}
.prop-sb { flex: 1; padding: 1px 1px; }
.prop-sb .sb-btn { width: 100%; }

.float-badge {
  position: absolute;
  left: 1408px;
  top: 735px;
  width: 40px;
  height: 40px;
  border-radius: 50%;
  background: #23b357;
  border: 3px solid #e4e4e4;
  box-sizing: border-box;
  box-shadow: 0 1px 4px #0006;
}
</style>

<style>
.lat { font-family: "DejaVu Sans Mono", monospace; font-size: 10px; white-space: pre; }
.bar { vertical-align: -1px; flex: none; margin: 0 1.5px 0 2px; }
</style>
